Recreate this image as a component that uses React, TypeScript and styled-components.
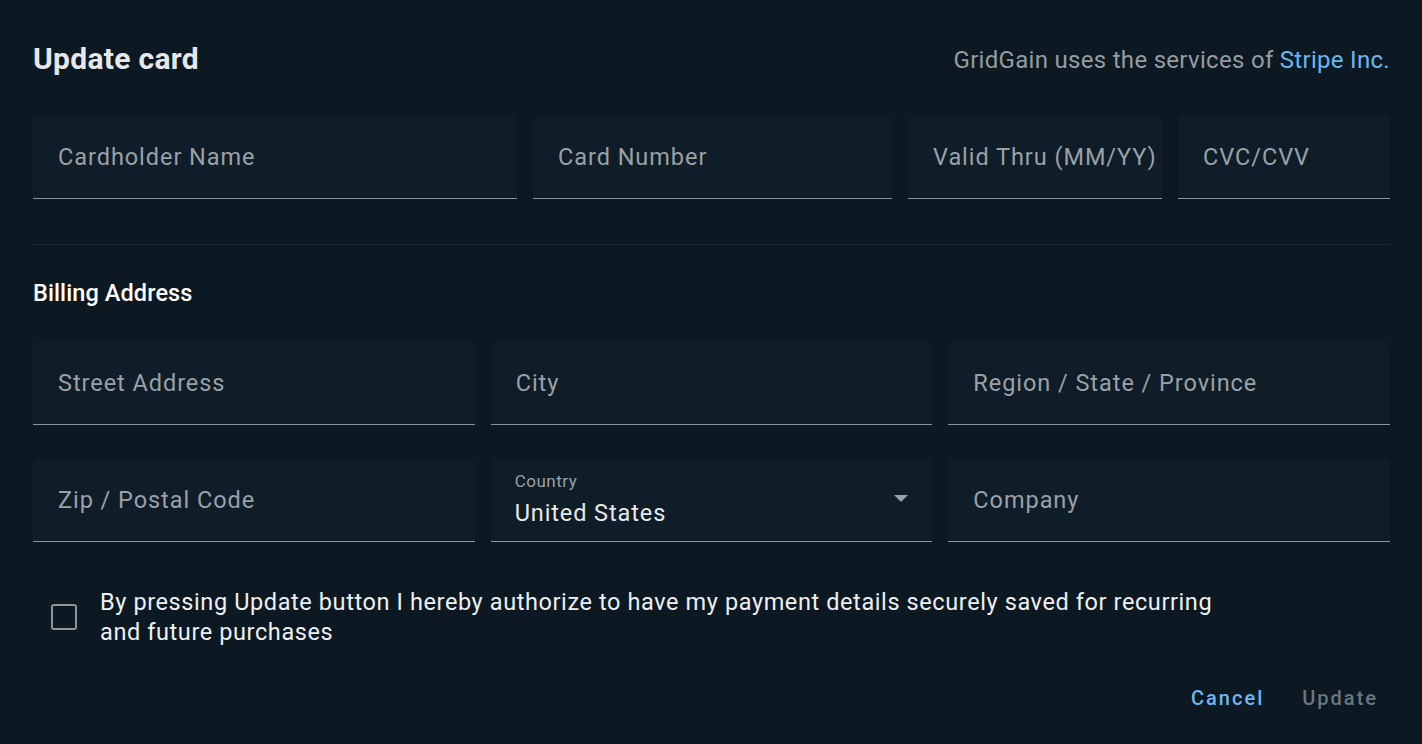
import React from "react";
import styled, { createGlobalStyle } from "styled-components";

const Global = createGlobalStyle`
  html, body { margin: 0; padding: 0; background: #0c1922; }
  body { font-family: Roboto, "Noto Sans", sans-serif; -webkit-font-smoothing: antialiased; }
  * { box-sizing: border-box; }
`;

const Dialog = styled.div`
  width: 1422px;
  height: 744px;
  background: #0c1922;
  padding: 32px 32px 0 33px;
  display: flex;
  flex-direction: column;
`;

const Header = styled.div`
  height: 52px;
  margin-bottom: 31px;
  display: flex;
  align-items: center;
  justify-content: space-between;
`;

const Title = styled.h2`
  margin: 0;
  font-size: 30px;
  font-weight: 700;
  color: #e6e8ea;
  letter-spacing: 0.3px;
`;

const Notice = styled.div`
  font-size: 24px;
  color: #959ca1;
  letter-spacing: 0.3px;
  padding-top: 4px;
`;

const Link = styled.a`
  color: #6ab8f2;
  text-decoration: none;
`;

const Row = styled.div<{ $cols: string; $mb?: number }>`
  display: grid;
  grid-template-columns: ${(p) => p.$cols};
  column-gap: 16px;
  margin-bottom: ${(p) => p.$mb ?? 0}px;
`;

const Field = styled.div`
  min-width: 0;
  height: 84px;
  background: #0e1d27;
  border-radius: 5px 5px 0 0;
  border-bottom: 1px solid #8c959c;
  padding: 0 24px 0 24px;
  display: flex;
  align-items: center;
  justify-content: space-between;
  overflow: hidden;
`;

const Placeholder = styled.span`
  font-size: 23.5px;
  color: #9aa1a6;
  letter-spacing: 0.95px;
  white-space: nowrap;
  padding-left: 1px;
`;

const SelectBody = styled.div`
  display: flex;
  flex-direction: column;
`;

const SmallLabel = styled.span`
  font-size: 17px;
  color: #9aa1a6;
  letter-spacing: 0.5px;
  line-height: 22px;
  margin-bottom: 5px;
`;

const Value = styled.span`
  font-size: 23.5px;
  color: #e6e8ea;
  letter-spacing: 0.9px;
  line-height: 32px;
`;

const Caret = styled.svg`
  width: 14px;
  height: 7px;
  margin-top: -2px;
`;

const Divider = styled.hr`
  border: none;
  height: 1px;
  background: #1e2b35;
  margin: 45px 0 33px;
`;

const Section = styled.div`
  font-size: 23.5px;
  font-weight: 500;
  color: #ffffff;
  line-height: 30px;
  margin-bottom: 33px;
  letter-spacing: 0.1px;
`;

const Consent = styled.label`
  display: flex;
  align-items: center;
  margin-top: 45px;
  padding-left: 18px;
  gap: 23px;
`;

const Box = styled.span`
  width: 26px;
  height: 26px;
  border: 2.5px solid #8c959c;
  border-radius: 3px;
  flex-shrink: 0;
`;

const ConsentText = styled.span`
  font-size: 23.5px;
  line-height: 30px;
  color: #eef0f2;
  letter-spacing: 0.6px;
  max-width: 1125px;
`;

const Actions = styled.div`
  display: flex;
  justify-content: flex-end;
  gap: 14px;
  margin-top: 29px;
`;

const Button = styled.button<{ $primary?: boolean }>`
  background: none;
  border: none;
  font-family: inherit;
  font-size: 20px;
  font-weight: 500;
  letter-spacing: 2px;
  padding: 8px 12px;
  height: 44px;
  color: ${(p) => (p.$primary ? "#6ab8f2" : "#6b777f")};
  cursor: pointer;
`;

export default function App() {
  return (
    <>
      <Global />
      <Dialog>
        <Header>
          <Title>Update card</Title>
          <Notice>
            GridGain uses the services of <Link href="#">Stripe Inc.</Link>
          </Notice>
        </Header>
        <Row $cols="minmax(0,484fr) minmax(0,359fr) minmax(0,254fr) minmax(0,212fr)">
          <Field><Placeholder>Cardholder Name</Placeholder></Field>
          <Field><Placeholder>Card Number</Placeholder></Field>
          <Field><Placeholder>Valid Thru (MM/YY)</Placeholder></Field>
          <Field><Placeholder>CVC/CVV</Placeholder></Field>
        </Row>
        <Divider />
        <Section>Billing Address</Section>
        <Row $cols="repeat(3, minmax(0,1fr))" $mb={33}>
          <Field><Placeholder>Street Address</Placeholder></Field>
          <Field><Placeholder>City</Placeholder></Field>
          <Field><Placeholder>Region / State / Province</Placeholder></Field>
        </Row>
        <Row $cols="repeat(3, minmax(0,1fr))">
          <Field><Placeholder>Zip / Postal Code</Placeholder></Field>
          <Field>
            <SelectBody>
              <SmallLabel>Country</SmallLabel>
              <Value>United States</Value>
            </SelectBody>
            <Caret viewBox="0 0 14 7">
              <path d="M0 0 L14 0 L7 7 Z" fill="#9aa1a6" />
            </Caret>
          </Field>
          <Field><Placeholder>Company</Placeholder></Field>
        </Row>
        <Consent>
          <Box />
          <ConsentText>
            By pressing Update button I hereby authorize to have my payment details securely saved for recurring and future purchases
          </ConsentText>
        </Consent>
        <Actions>
          <Button $primary>Cancel</Button>
          <Button>Update</Button>
        </Actions>
      </Dialog>
    </>
  );
}
